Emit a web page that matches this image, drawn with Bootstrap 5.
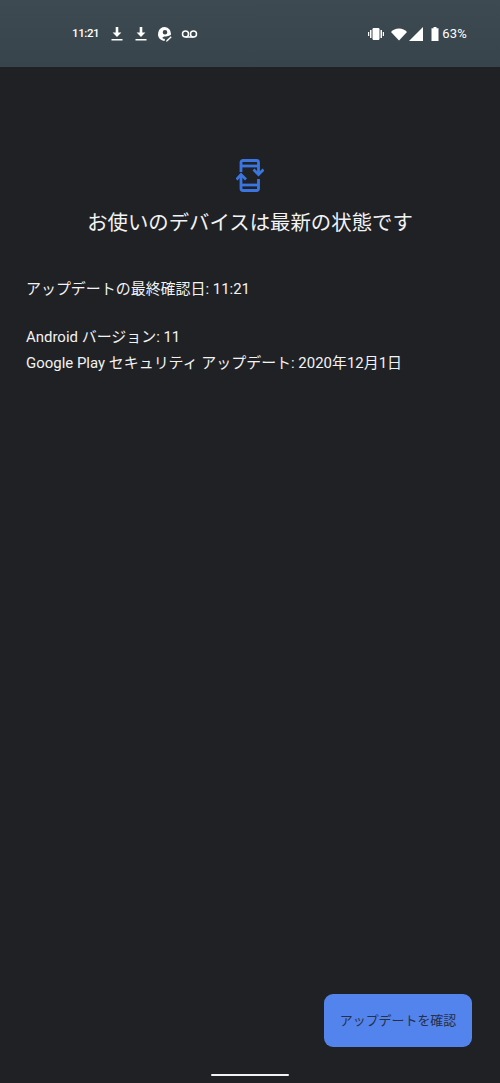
<!DOCTYPE html>
<html lang="ja">
<head>
<meta charset="utf-8">
<title>システム アップデート</title>
<link href="https://cdn.jsdelivr.net/npm/bootstrap@5.3.0/dist/css/bootstrap.min.css" rel="stylesheet">
<style>
html,body{height:100%;}
body{background:#202124;color:#f1f3f4;font-family:Roboto,"Noto Sans CJK JP",sans-serif;width:500px;height:1083px;overflow:hidden;}
.shell{height:1083px;}
.statusbar{height:67px;background:linear-gradient(#3d4a51,#37444b);padding:1px 33px 0 72px;color:#fff;font-size:12px;font-weight:500;}
.statusbar svg{display:block;}
.sb-left{gap:8px;}
.sb-time{width:26px;margin-right:2.5px;font-size:11.500px;letter-spacing:-.4px;}
.sb-pct{font-size:13px;font-weight:400;margin-left:3px;letter-spacing:.2px;}
.gap-vib{margin-left:7px;}
.gap-sig{margin-left:2px;}
.headblock{padding-top:91px;}
.head-title{font-size:20.400px;font-weight:400;line-height:28px;margin:0;padding-top:16px;color:#f1f3f4;}
.infos{padding:0 26px;font-size:14.960px;line-height:26px;}
.infos p{margin:0;}
.info-a{padding-top:39px;padding-bottom:22px;}
.actionbtn{width:148px;height:52.500px;background:#5383ec;border:0;border-radius:9px;color:#253049;font-size:12.950px;padding:0;}
.actionbtn:hover{background:#5383ec;color:#253049;}
.gesture{width:78px;height:2px;background:#f1f3f4;border-radius:1px;margin-bottom:7px;}
.btnrow{padding-right:28px;padding-bottom:27.500px;}
</style>
</head>
<body>
<div class="shell d-flex flex-column">
  <div class="statusbar d-flex align-items-center justify-content-between">
    <div class="d-flex align-items-center sb-left">
      <span class="sb-time">11:21</span>
      <svg width="16" height="16" viewBox="0 0 16 16" fill="#fff"><path d="M6.700 1h2.600v5.500h3.100L8 11 3.600 6.500h3.100zM2.500 13h11v1.500h-11z"/></svg>
      <svg width="16" height="16" viewBox="0 0 16 16" fill="#fff"><path d="M6.700 1h2.600v5.500h3.100L8 11 3.600 6.500h3.100zM2.500 13h11v1.500h-11z"/></svg>
      <svg width="16" height="16" viewBox="0 0 16 16" fill="#fff"><path fill-rule="evenodd" d="M8 1a7 7 0 0 0-3 13.300c.8.400 1.700.6 2.600.7l.3-2c-.7-.1-2.300-.5-2.600-1 .2-1.100 1.700-1.600 2.700-1.600.4 0 .8 0 1.200.2l2.800-.9.100-.1c.8-.1 1.900-.4 1.900-1.600A7 7 0 0 0 8 1zm0 3a2.300 2.300 0 1 1 0 4.600A2.300 2.300 0 0 1 8 4z"/><path d="M9.500 14.200l4.300-4 .9 1-4.100 4.100-1.600.4z"/></svg>
      <svg width="17" height="16" viewBox="0 0 17 16" fill="none" stroke="#fff" stroke-width="1.500"><circle cx="4.500" cy="8" r="3"/><circle cx="12.500" cy="8" r="3"/><path d="M4.500 11h8"/></svg>
    </div>
    <div class="d-flex align-items-center">
      <svg width="16" height="14" viewBox="0 0 16 14" fill="#fff"><rect x="4.500" y="1" width="7" height="12" rx="1.200"/><rect x="2" y="3" width="1.500" height="8"/><rect x="12.500" y="3" width="1.500" height="8"/><rect x="0" y="5" width="1.200" height="4"/><rect x="14.800" y="5" width="1.200" height="4"/></svg>
      <svg width="16" height="13" viewBox="0 0 17 13" fill="#fff" class="gap-vib"><path d="M0 3.800C2 1.500 5 0 8.500 0S15 1.500 17 3.800L8.500 13z"/></svg>
      <svg width="14" height="14" viewBox="0 0 14 14" fill="#fff" class="gap-sig"><path d="M14 0v14H0z"/></svg>
      <svg width="8" height="14" viewBox="0 0 8 14" fill="#fff" class="ms-2"><path d="M2.500 0h3v1.300H7.500V14H.5V1.300h2z"/></svg>
      <span class="sb-pct">63%</span>
    </div>
  </div>
  <div class="headblock text-center">
    <svg width="28" height="35" viewBox="0 0 28 35" fill="none" stroke="#3b75e0" stroke-width="2.800" class="d-block mx-auto">
      <path d="M5 14V4.500a2 2 0 0 1 2-2h13.500a2 2 0 0 1 2 2V16.500"/>
      <path d="M5 8h17.500"/>
      <path d="M17.500 11.500l5 5 5-5"/>
      <path d="M.5 21.500l4.500-5 5 5"/>
      <path d="M5 16.500V30.500a2 2 0 0 0 2 2h13.500a2 2 0 0 0 2-2V21"/>
      <path d="M5 27h17.500"/>
    </svg>
    <h1 class="head-title">お使いのデバイスは最新の状態です</h1>
  </div>
  <div class="infos">
    <p class="info-a">アップデートの最終確認日: 11:21</p>
    <p>Android バージョン: 11</p>
    <p>Google Play セキュリティ アップデート: 2020年12月1日</p>
  </div>
  <div class="flex-grow-1"></div>
  <div class="d-flex justify-content-end btnrow">
    <button type="button" class="btn actionbtn">アップデートを確認</button>
  </div>
  <div class="d-flex justify-content-center"><div class="gesture"></div></div>
</div>
<script src="https://cdn.jsdelivr.net/npm/bootstrap@5.3.0/dist/js/bootstrap.bundle.min.js"></script>
</body>
</html>
